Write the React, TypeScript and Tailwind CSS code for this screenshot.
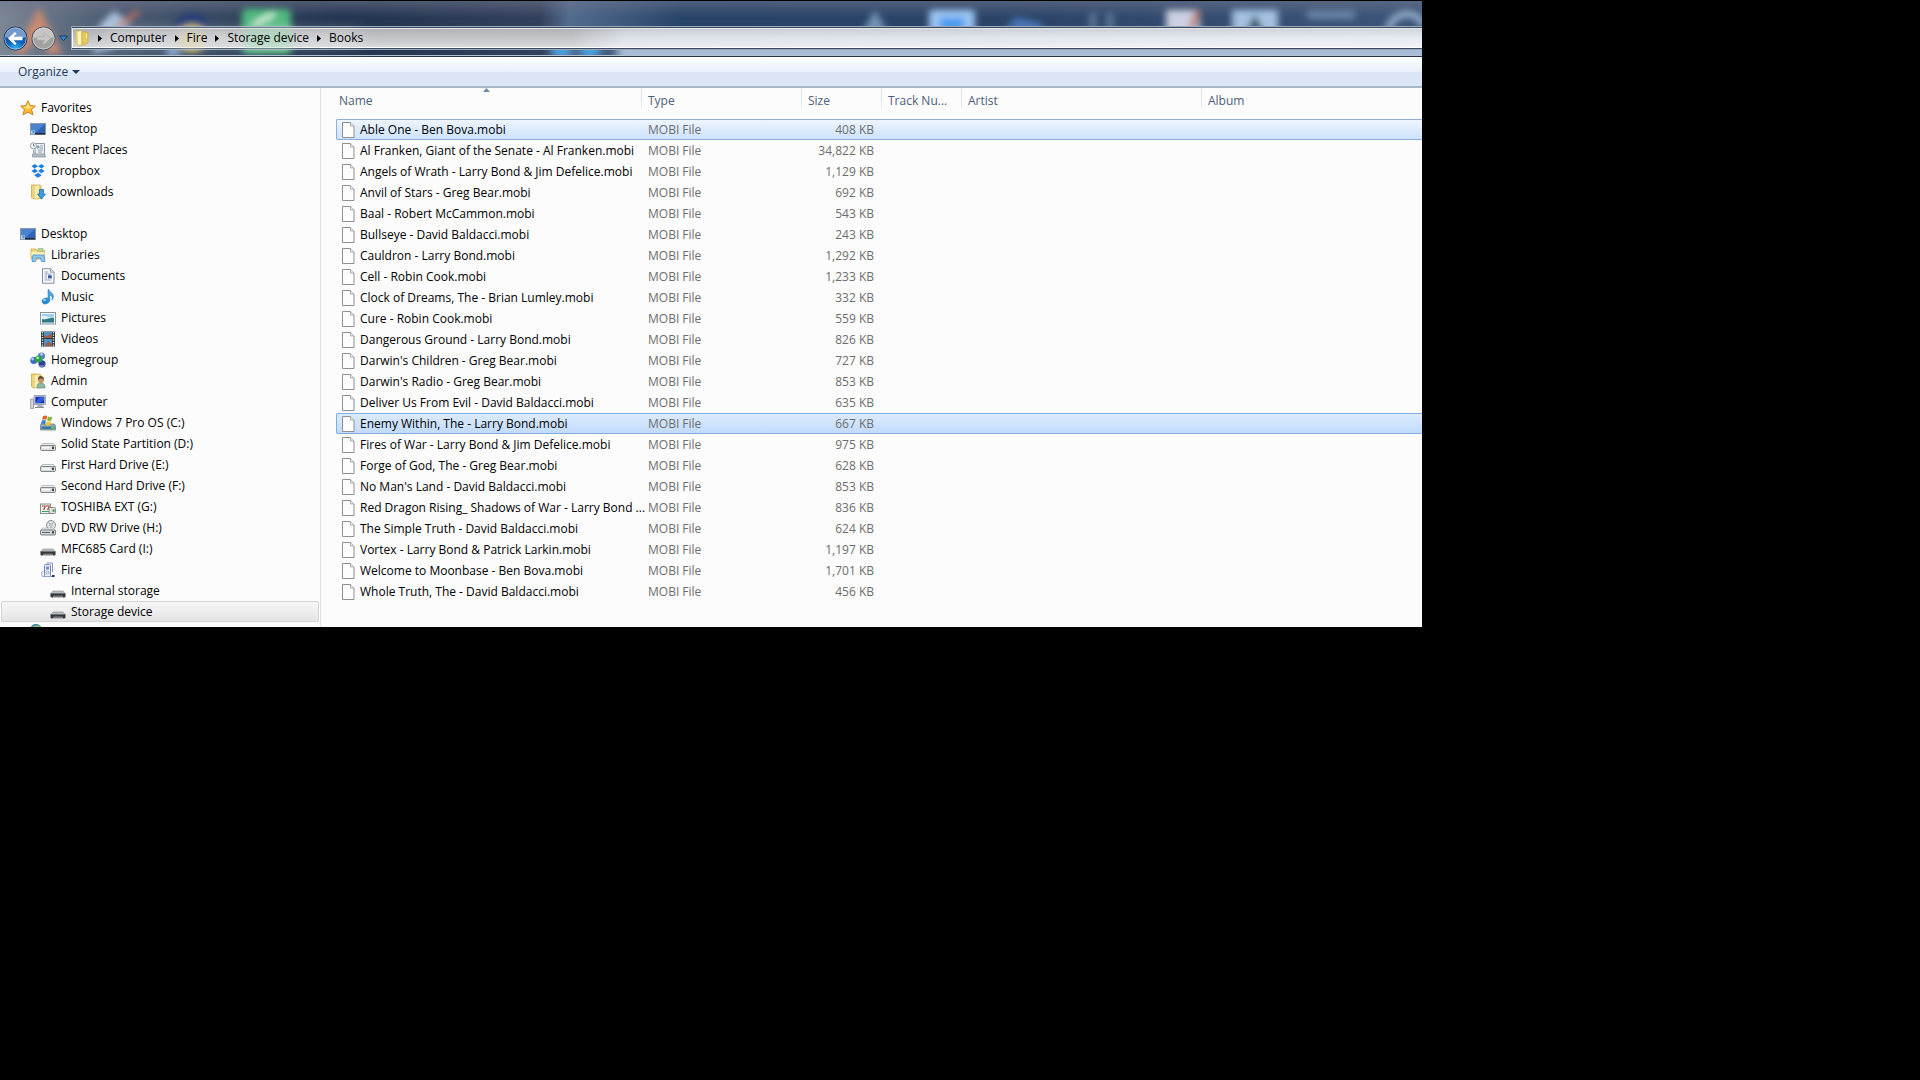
import React, { useState } from "react";
import clsx from "clsx";

type IconName =
  | "star"
  | "desktop"
  | "recent"
  | "dropbox"
  | "downloads"
  | "libraries"
  | "documents"
  | "music"
  | "pictures"
  | "videos"
  | "homegroup"
  | "admin"
  | "computer"
  | "windows"
  | "drive"
  | "toshiba"
  | "dvd"
  | "card"
  | "player"
  | "network";

const iconShapes: Record<IconName, React.ReactNode> = {
  star: (
    <>
      <path d="M8 .8 10.2 5.6 15.4 6.1 11.6 9.6 13 14.8 8 12.2 3 14.8 4.3 9.6.6 6.1 5.8 5.6Z" fill="#fdb92e" stroke="#c87a1c" strokeWidth=".9" />
      <path d="M8 2.6 9.5 6.5 13.4 6.9 8 9 2.8 6.9 6.5 6.5Z" fill="#ffe58a" />
    </>
  ),
  desktop: (
    <>
      <rect x=".5" y="2.5" width="15" height="11" fill="#3b4756" stroke="#8d97a3" />
      <path d="M1 3h14v9H1z" fill="#2f64b8" />
      <path d="M1 3h14L5 12H1z" fill="#5c93de" opacity=".65" />
      <path d="M1 12h14v1.500H1z" fill="#1f2c3d" />
      <rect x="1" y="9.500" width="4" height="4" fill="#b9d9f2" />
      <path d="M2 12.500 4 10.500M4 10.500v2M4 10.500H2.500" stroke="#2b5ea8" strokeWidth=".7" />
    </>
  ),
  recent: (
    <>
      <path d="M5 1.5h9.5V13H5z" fill="#eef2f5" stroke="#8c979e" />
      <path d="M7 4h2v2H7zM10 4h3M10 6h3M8 8h5M8 10h4" fill="#aac2d4" stroke="#7897ad" strokeWidth=".9" />
      <path d="M2.500 12h12l1 3h-13z" fill="#b8bfc3" stroke="#8c979e" strokeWidth=".8" />
      <circle cx="3.500" cy="3.800" r="3" fill="#f4f6f8" stroke="#8a959d" strokeWidth=".9" />
      <path d="M3.500 2v2H5" fill="none" stroke="#59646c" strokeWidth=".8" />
      <path d="M3.500 8v3M3 11h3" stroke="#a4adb3" />
    </>
  ),
  dropbox: (
    <path
      d="M4.700 1 8 3.200 4.700 5.400 1.400 3.200ZM11.300 1l3.300 2.200-3.300 2.200L8 3.200ZM4.700 5.800 8 8 4.700 10.200 1.400 8ZM11.300 5.800 14.600 8l-3.300 2.200L8 8ZM8 9.700l3.800 2.500L8 14.800l-3.800-2.600Z"
      fill="#1f7fe0"
    />
  ),
  downloads: (
    <>
      <path d="M1.500 1h8l1.500 1v12.500l-7 .5-2.500-1.500Z" fill="#ecd57f" stroke="#c9a94a" strokeWidth=".8" />
      <path d="M5 2.500 8.500 1v13L5 15Z" fill="#f8ecb4" />
      <path d="M9.500 5.500h4V10h2L11.500 15.200 7.500 10h2Z" fill="#3d9be0" stroke="#2a6ea9" strokeWidth=".8" />
    </>
  ),
  libraries: (
    <>
      <path d="M1 2h5l1 1.500h7.500V12H1z" fill="#f0d981" stroke="#caa64a" strokeWidth=".8" />
      <path d="M8 1.500h5v3H8z" fill="#b8d59a" stroke="#8fae67" strokeWidth=".6" />
      <path d="M1.500 5h13v4h-13z" fill="#faeeb9" />
      <path d="M2 14.500 3 8h11l1 6.500h-3.500L10.500 11h-4l-1 3.500Z" fill="#8cc8ee" stroke="#4b8fc4" strokeWidth=".8" />
    </>
  ),
  documents: (
    <>
      <path d="M2.500 .7h8l3.500 3.500v11H2.500z" fill="#fbfcfd" stroke="#7f8b9a" />
      <path d="M10.500 .7v3.500H14" fill="#dfe6ee" stroke="#7f8b9a" strokeWidth=".8" />
      <path d="M4.500 4h4M4.500 6h7M4.500 8h2.500M4.500 10h2.500M4.500 12h7" stroke="#8497b4" strokeWidth=".9" />
      <rect x="8" y="7.200" width="3.800" height="3.200" fill="#3e5e9f" />
    </>
  ),
  music: (
    <>
      <path d="M9 .5c.5 3 5 3.500 4.500 7.500-.1 1.300-.8 2.300-1.600 3 .8-2.300.3-4.300-2-5V12H8V.5Z" fill="#4ba3dd" stroke="#2577b5" strokeWidth=".5" />
      <ellipse cx="5.700" cy="12" rx="4" ry="3.200" fill="#2b8bd0" transform="rotate(-20 5.700 12)" />
      <ellipse cx="4.700" cy="11" rx="1.800" ry="1" fill="#8fd0f5" />
    </>
  ),
  pictures: (
    <>
      <rect x=".5" y="2.500" width="15" height="11.500" fill="#fafbfc" stroke="#8b949c" />
      <path d="M2 4h12v8.500H2z" fill="#9ad0ee" />
      <path d="M2 6.500c4-1.500 7 2 12 .5v2.500H2z" fill="#e2f2f4" />
      <path d="M2 9c4 1.500 8-2 12-1v4.500H2z" fill="#2d7c86" />
    </>
  ),
  videos: (
    <>
      <path d="M1 .5h14v15H1z" fill="#2c343c" />
      <path d="M4 1h8v6H4zM4 8h8v7H4z" fill="#4e94c8" />
      <path d="M4 4 8 5.500 10 2 12 4v3H4zM5 15l3-5 4 3v2z" fill="#a15c4d" />
      <path d="M2.500 1v14M13.500 1v14" stroke="#e8eef2" strokeWidth="1.400" strokeDasharray="1.300 1.200" />
    </>
  ),
  homegroup: (
    <>
      <circle cx="3.800" cy="8.500" r="3.500" fill="#3a6fc0" />
      <circle cx="11.500" cy="4" r="3.600" fill="#5a82cf" />
      <circle cx="12" cy="11.800" r="3.600" fill="#2f3f9d" />
      <circle cx="8.600" cy="7" r="3.600" fill="#2ca044" />
      <circle cx="7.700" cy="5.800" r="1.400" fill="#b6edb0" />
      <circle cx="2.700" cy="7.100" r="1.300" fill="#aecdf3" />
      <circle cx="11.500" cy="2.300" r="1.200" fill="#c9dafa" />
      <path d="M9.500 13.500c1.500 1 3.500 1 5-.5" fill="none" stroke="#a6b5ee" />
    </>
  ),
  admin: (
    <>
      <path d="M1.500 1h7l2.500 1v12.500l-7 .5-2.500-1.500Z" fill="#ecd57f" stroke="#c9a94a" strokeWidth=".8" />
      <path d="M5 2.500 8.500 1.500v12L5 15Z" fill="#f8ecb4" />
      <path d="M7 15c0-4 1.500-5 4-5s4 1 4 5Z" fill="#8cb89e" stroke="#5d8c79" strokeWidth=".6" />
      <circle cx="11" cy="7" r="3" fill="#c59469" />
      <path d="M8 7c-.2-3.500 1.500-4 3-4s3 1 3 4c-1-2-4-2-6 0Z" fill="#6b4a30" />
    </>
  ),
  computer: (
    <>
      <path d="M4 1.500h11.500v9H4z" fill="#d5d8dc" stroke="#9197a0" strokeWidth=".8" />
      <path d="M5.300 2.700h9v6.600h-9z" fill="#1734c0" />
      <path d="M10 2.700h4.300v3L9 9.300H5.300Z" fill="#4d7af0" opacity=".6" />
      <path d="M8 10.500h4l1.500 3h-7z" fill="#a9aeb6" />
      <path d="M.7 5h2.800v9.500H.7z" fill="#d7dade" stroke="#8b929b" strokeWidth=".8" />
      <path d="M5 13.500h9" stroke="#868d96" />
    </>
  ),
  windows: (
    <>
      <path d="M1 9h13.500l1 2v4H.5v-4Z" fill="#9eb0b6" stroke="#65747a" strokeWidth=".7" />
      <path d="M1.500 11.500h13V14h-13z" fill="#357a9c" />
      <path d="M11 12h3v1.500h-3z" fill="#66cf62" />
      <path d="M3 1.500C4.500.3 6 .3 7.200 1.200L6.200 5C5 4 3.500 4 2 5Z" fill="#e85a26" />
      <path d="M8 1.600c1.300.8 2.700.8 4.300-.1l-1 3.700c-1.500 1-3 .9-4.300 0Z" fill="#79b938" />
      <path d="M1.800 5.800c1.500-1 3-1 4.200 0L5 9.500c-1.200-1-2.700-1-4.200 0Z" fill="#3b82cf" />
      <path d="M6.800 6.200c1.300.8 2.700.8 4.300-.1l-1 3.700c-1.500 1-3 .9-4.300 0Z" fill="#f6c42a" />
    </>
  ),
  drive: (
    <>
      <path d="M2.500 7.500h11l2 2.500H.5Z" fill="#eceeef" stroke="#a3a8ab" strokeWidth=".7" />
      <rect x=".5" y="9.500" width="15" height="5" rx="1.200" fill="#d9dcdd" stroke="#777d80" strokeWidth=".9" />
      <path d="M2 11h8v1.500H2z" fill="#f8f9f9" />
      <rect x="12" y="10.600" width="2" height="2.500" fill="#454c48" />
    </>
  ),
  toshiba: (
    <>
      <rect x=".5" y="5" width="10" height="9.500" fill="#eef4ef" stroke="#7c9484" />
      <path d="M2 7h3v1.200L3.500 11M6 7h3v1.200L7.500 11" fill="none" stroke="#b23a3a" strokeWidth="1.200" />
      <path d="M2 12.500h7" stroke="#4d9b66" />
      <rect x="9" y="8.500" width="6.500" height="6" rx="1" fill="#dfe3e1" stroke="#7c8580" strokeWidth=".9" />
      <path d="M12.500 10.500h2v2.200h-2z" fill="#3c7f49" />
    </>
  ),
  dvd: (
    <>
      <circle cx="11" cy="5" r="4.500" fill="#e3e7e9" stroke="#7c8387" strokeWidth=".9" />
      <path d="M11 5 8 2M11 5l3-3M11 5v4" stroke="#9aa7b0" strokeWidth=".8" />
      <circle cx="11" cy="5" r="1.300" fill="#fff" stroke="#7c8387" strokeWidth=".7" />
      <path d="M2.500 8h11l2 2.500H.5Z" fill="#e6e8e9" stroke="#a3a8ab" strokeWidth=".6" />
      <rect x=".5" y="10" width="15" height="5" rx="1" fill="#d3d6d8" stroke="#6d7376" strokeWidth=".9" />
      <path d="M2 12.500h8" stroke="#5d6366" />
      <rect x="12" y="11.200" width="2" height="2.200" fill="#3c443f" />
    </>
  ),
  card: (
    <>
      <path d="M3 8h10l2.500 3H.5Z" fill="#b8bbbc" stroke="#8a8e90" strokeWidth=".6" />
      <path d="M.5 10.500h15v3.500l-2 .8-1-1.300h-9l-1 1.300-2-.8Z" fill="#34383a" />
      <path d="M3.500 12.500h9v2h-9z" fill="#7a7f82" />
    </>
  ),
  player: (
    <>
      <path d="M6.500 1h6v9" fill="none" stroke="#8497c4" />
      <rect x="4.500" y="2.500" width="6" height="12" rx="1" fill="#e9eef8" stroke="#7285b4" />
      <path d="M6 4.500h3v3H6z" fill="#6f8fd0" />
      <circle cx="7.500" cy="10.500" r="1.400" fill="#fff" stroke="#7285b4" strokeWidth=".8" />
      <path d="M3.500 9C1.500 9.500 1 12 2.500 14.500H12" fill="none" stroke="#8fa1ca" />
      <path d="M12 13h2.500v2H12z" fill="#27304c" />
    </>
  ),
  network: (
    <>
      <circle cx="6" cy="8.500" r="6" fill="#4194c7" stroke="#2d6d9f" />
      <path d="M2 6c2-3 6-4 9-1L6 9Z" fill="#7cc078" />
    </>
  ),
};

function Icon({ name }: { name: IconName }) {
  return (
    <svg viewBox="0 0 16 16" className="w-4 h-4 shrink-0" aria-hidden="true">
      {iconShapes[name]}
    </svg>
  );
}

interface NavItem {
  label: string;
  icon: IconName;
  level: 0 | 1 | 2 | 3;
}

const indents = ["pl-[19px]", "pl-[29px]", "pl-[39px]", "pl-[49px]"];

const favorites: NavItem[] = [
  { label: "Favorites", icon: "star", level: 0 },
  { label: "Desktop", icon: "desktop", level: 1 },
  { label: "Recent Places", icon: "recent", level: 1 },
  { label: "Dropbox", icon: "dropbox", level: 1 },
  { label: "Downloads", icon: "downloads", level: 1 },
];

const places: NavItem[] = [
  { label: "Desktop", icon: "desktop", level: 0 },
  { label: "Libraries", icon: "libraries", level: 1 },
  { label: "Documents", icon: "documents", level: 2 },
  { label: "Music", icon: "music", level: 2 },
  { label: "Pictures", icon: "pictures", level: 2 },
  { label: "Videos", icon: "videos", level: 2 },
  { label: "Homegroup", icon: "homegroup", level: 1 },
  { label: "Admin", icon: "admin", level: 1 },
  { label: "Computer", icon: "computer", level: 1 },
  { label: "Windows 7 Pro OS (C:)", icon: "windows", level: 2 },
  { label: "Solid State Partition (D:)", icon: "drive", level: 2 },
  { label: "First Hard Drive (E:)", icon: "drive", level: 2 },
  { label: "Second Hard Drive (F:)", icon: "drive", level: 2 },
  { label: "TOSHIBA EXT (G:)", icon: "toshiba", level: 2 },
  { label: "DVD RW Drive (H:)", icon: "dvd", level: 2 },
  { label: "MFC685 Card (I:)", icon: "card", level: 2 },
  { label: "Fire", icon: "player", level: 2 },
  { label: "Internal storage", icon: "card", level: 3 },
  { label: "Storage device", icon: "card", level: 3 },
];

const files: [string, string][] = [
  ["Able One - Ben Bova.mobi", "408 KB"],
  ["Al Franken, Giant of the Senate - Al Franken.mobi", "34,822 KB"],
  ["Angels of Wrath - Larry Bond & Jim Defelice.mobi", "1,129 KB"],
  ["Anvil of Stars - Greg Bear.mobi", "692 KB"],
  ["Baal - Robert McCammon.mobi", "543 KB"],
  ["Bullseye - David Baldacci.mobi", "243 KB"],
  ["Cauldron - Larry Bond.mobi", "1,292 KB"],
  ["Cell - Robin Cook.mobi", "1,233 KB"],
  ["Clock of Dreams, The - Brian Lumley.mobi", "332 KB"],
  ["Cure - Robin Cook.mobi", "559 KB"],
  ["Dangerous Ground - Larry Bond.mobi", "826 KB"],
  ["Darwin's Children - Greg Bear.mobi", "727 KB"],
  ["Darwin's Radio - Greg Bear.mobi", "853 KB"],
  ["Deliver Us From Evil - David Baldacci.mobi", "635 KB"],
  ["Enemy Within, The - Larry Bond.mobi", "667 KB"],
  ["Fires of War - Larry Bond & Jim Defelice.mobi", "975 KB"],
  ["Forge of God, The - Greg Bear.mobi", "628 KB"],
  ["No Man's Land - David Baldacci.mobi", "853 KB"],
  ["Red Dragon Rising_ Shadows of War - Larry Bond ...", "836 KB"],
  ["The Simple Truth - David Baldacci.mobi", "624 KB"],
  ["Vortex - Larry Bond & Patrick Larkin.mobi", "1,197 KB"],
  ["Welcome to Moonbase - Ben Bova.mobi", "1,701 KB"],
  ["Whole Truth, The - David Baldacci.mobi", "456 KB"],
];

// Desktop showing through the Aero glass
function GlassBackdrop() {
  return (
    <svg
      className="absolute inset-0 w-full h-full"
      viewBox="0 0 1422 56"
      preserveAspectRatio="none"
      aria-hidden="true"
    >
      <defs>
        <linearGradient id="glass">
          <stop offset="0" stopColor="#7c8794" />
          <stop offset=".07" stopColor="#505f76" />
          <stop offset=".16" stopColor="#33455e" />
          <stop offset=".24" stopColor="#22344f" />
          <stop offset=".38" stopColor="#33405c" />
          <stop offset=".4" stopColor="#526c8e" />
          <stop offset=".48" stopColor="#264468" />
          <stop offset=".72" stopColor="#2c4468" />
          <stop offset="1" stopColor="#3c5578" />
        </linearGradient>
        <linearGradient id="glassTop" x2="0" y2="1">
          <stop offset="0" stopColor="#70758c" stopOpacity=".55" />
          <stop offset=".3" stopColor="#70758c" stopOpacity="0" />
        </linearGradient>
        <filter id="soft" x="-40%" y="-40%" width="180%" height="180%">
          <feGaussianBlur stdDeviation="4" />
        </filter>
        <filter id="softer" x="-40%" y="-40%" width="180%" height="180%">
          <feGaussianBlur stdDeviation="3.5" />
        </filter>
      </defs>
      <rect width="1422" height="56" fill="url(#glass)" />
      <rect width="1422" height="56" fill="url(#glassTop)" />
      <path d="M617 38H1440V70H617Z" fill="#a7bdd7" filter="url(#soft)" />
      <g filter="url(#softer)">
        <path d="M39 6 62 54H48L39 34 24 54H14Z" fill="#c98a72" />
        <path d="M92 54 100 24 114 10 130 22 112 48Z" fill="#a9c3dd" />
        <path d="M116 27 139 11" stroke="#b8705a" strokeWidth="5" />
        <ellipse cx="192" cy="22" rx="16" ry="10" fill="#263d78" />
        <circle cx="192" cy="38" r="14" fill="#c5b552" />
        <path d="M164 56 172 44 184 56Z" fill="#8cadd8" />
        <rect x="242" y="8" width="49" height="46" rx="5" fill="#4fb97f" />
        <path d="M254 24 274 13" stroke="#d6f3e0" strokeWidth="5" />
        <ellipse cx="561" cy="50" rx="10" ry="8" fill="#4aa0e0" />
        <ellipse cx="590" cy="50" rx="10" ry="8" fill="#4aa0e0" />
        <path d="M863 30 875 9 887 30Z" fill="#7494b5" />
        <rect x="929" y="9" width="46" height="34" rx="4" fill="#9cc5f2" />
        <rect x="940" y="17" width="24" height="16" fill="#4d9bf0" />
        <path d="M1004 30 1016 16 1040 22 1046 32Z" fill="#4774b3" />
        <path d="M1093 12v18M1110 12v18" stroke="#5f7a99" strokeWidth="7" />
        <rect x="1166" y="9" width="34" height="24" fill="#ccd0e2" />
        <path d="M1198 10 1192 28" stroke="#b9705f" strokeWidth="6" />
        <rect x="1232" y="9" width="46" height="26" fill="#a4c2e0" />
        <path d="M1244 35 1255 13 1266 35Z" fill="#2f5169" />
        <rect x="1307" y="9" width="48" height="10" fill="#6580a3" />
        <path d="M1388 34c0-26 34-26 34-8" fill="none" stroke="#92abc8" strokeWidth="7" />
      </g>
    </svg>
  );
}

function Breadcrumbs() {
  const path = ["Computer", "Fire", "Storage device", "Books"];
  return (
    <nav
      aria-label="Address"
      className="flex-1 min-w-0 h-6 flex items-center border-y border-l border-[#9aa8b8] bg-[#30415a]"
    >
      <div className="relative flex-1 h-[22px] border-y border-[#3b4b63] flex">
        <div className="absolute inset-0 bg-[linear-gradient(to_right,#c0c2c6_0,#c3c5c8_37%,#dde2e9_41%,#e6ebf2_100%)] border-y border-l border-white" />
        <div className="absolute inset-0 bg-linear-to-b from-black/10 via-transparent to-white/40" />
        {/* White haze behind the path, tinted where a desktop icon lies below */}
        <div className="absolute left-8 top-1 w-64 h-3 bg-white/40 blur-sm" />
        <div className="absolute left-[172px] top-0 w-12 h-5 bg-[#a9dcbd]/70 blur-xs" />
        <div className="absolute left-[108px] top-1 w-6 h-4 bg-[#e3d9a8]/60 blur-xs" />
        <div className="relative flex items-center pl-0.5">
          <svg viewBox="0 0 16 16" className="w-4 h-4" aria-hidden="true">
            <path d="M2 1h6l1 1.500V15l-4 .5L2 14Z" fill="#efd980" stroke="#cdae50" strokeWidth=".6" />
            <path d="M8 2h5l1 1v10l-4 2-2-1Z" fill="#e6c95e" stroke="#c4a23e" strokeWidth=".6" />
            <path d="M4 2 7 1v13l-3 1Z" fill="#fdf4c0" />
            <path d="M12.500 4v4" stroke="#fff3ba" />
          </svg>
          {path.map((part) => (
            <React.Fragment key={part}>
              <svg viewBox="0 0 4 7" className="w-1 h-[7px] mx-2" aria-hidden="true">
                <path d="M0 0 4 3.500 0 7Z" fill="#000" />
              </svg>
              <button className="text-black whitespace-nowrap">{part}</button>
            </React.Fragment>
          ))}
        </div>
      </div>
    </nav>
  );
}

function TitleBar() {
  return (
    <header className="relative h-14 border-b border-[#26354d]">
      <GlassBackdrop />
      <div className="relative flex items-center h-[55px] pt-5 border-b border-[#b4c1d0]">
        <button aria-label="Back" className="ml-[3px]">
          <svg viewBox="0 0 25 25" className="w-[25px] h-[25px]">
            <defs>
              <radialGradient id="back" cx=".5" cy="1" r=".9">
                <stop offset="0" stopColor="#35c5f5" />
                <stop offset=".45" stopColor="#1463b6" />
                <stop offset="1" stopColor="#123d86" />
              </radialGradient>
            </defs>
            <circle cx="12.500" cy="12.500" r="11.500" fill="url(#back)" stroke="#1b2f55" />
            <path d="M2.500 11a10 9.500 0 0 1 20 0c-5 2-15 2-20 0Z" fill="#b5d2f1" opacity=".6" />
            <circle cx="12.500" cy="12.500" r="10.700" fill="none" stroke="#a9c8e8" strokeWidth=".8" />
            <path d="M5 12.500 12 6l1.500 1.500L10.500 10.800h9v3.400h-9l3 3.300L12 19Z" fill="#fff" />
          </svg>
        </button>
        <button aria-label="Forward" className="ml-[3px]">
          <svg viewBox="0 0 25 25" className="w-[25px] h-[25px]">
            <circle cx="12.500" cy="12.500" r="11.500" fill="#a3a19f" stroke="#454f5d" />
            <path d="M2.500 11a10 9.500 0 0 1 20 0c-5 2-15 2-20 0Z" fill="#d5d2d0" opacity=".75" />
            <circle cx="12.500" cy="12.500" r="10.500" fill="none" stroke="#d2d3d5" strokeWidth=".8" />
            <path d="M19.500 12.500 13 6.500l-1.500 1.500 2.500 2.700H6v3.600h8L11.500 17l1.500 1.500Z" fill="#c9c7c6" stroke="#a7a5a4" strokeWidth=".6" />
          </svg>
        </button>
        <button aria-label="Recent pages" className="ml-[3px] mr-[3px]">
          <svg viewBox="0 0 9 7" className="w-[9px] h-[7px]">
            <path d="M.7 1h7.600L4.500 5.800Z" fill="#3d8ad6" stroke="#14305c" strokeWidth=".9" />
          </svg>
        </button>
        <Breadcrumbs />
      </div>
    </header>
  );
}

function Toolbar() {
  return (
    <div className="h-[31px] flex items-center border-b-2 border-[#a9b7ca] bg-[linear-gradient(#fdfeff_0,#e9f0fa_50%,#dbe5f3_50%,#dbe6f4_100%)]">
      <button className="flex items-center gap-1 ml-[18px] text-[#1e395b]">
        Organize
        <svg viewBox="0 0 8 4" className="w-2 h-1" aria-hidden="true">
          <path d="M0 0h8L4 4Z" fill="#1e395b" />
        </svg>
      </button>
    </div>
  );
}

function NavList({ items, current }: { items: NavItem[]; current?: string }) {
  return (
    <ul className="px-px">
      {items.map((item) => (
        <li key={item.label}>
          <a
            href="#"
            className={clsx(
              "flex items-center gap-[5px] h-[21px] text-black whitespace-nowrap",
              item.label === current &&
                "rounded-xs bg-linear-to-b from-[#f8f8f8] to-[#e3e3e3] shadow-[inset_0_0_0_1px_#d5d5d5]",
              indents[item.level],
            )}
          >
            <Icon name={item.icon} />
            {item.label}
          </a>
        </li>
      ))}
    </ul>
  );
}

function Sidebar() {
  return (
    <aside className="w-[321px] shrink-0 border-r border-[#d6e2ef] pt-[9px] overflow-hidden [contain:size]">
      <NavList items={favorites} />
      <div className="h-[21px]" />
      <NavList items={places} current="Storage device" />
      <div className="pl-[30px]">
        <Icon name="network" />
      </div>
    </aside>
  );
}

function FileTable() {
  const [selected, setSelected] = useState("Enemy Within, The - Larry Bond.mobi");
  const columns = ["Name", "Type", "Size", "Track Nu...", "Artist", "Album"];

  return (
    <main className="flex-1 min-w-0 pl-[15px] pb-[25px] overflow-hidden">
      <table className="w-full table-fixed border-separate border-spacing-0 text-left">
        <colgroup>
          <col className="w-[306px]" />
          <col className="w-[160px]" />
          <col className="w-20" />
          <col className="w-20" />
          <col className="w-60" />
          <col />
        </colgroup>
        <thead>
          <tr className="h-[31px]">
            {columns.map((column, i) => (
              <th key={column} className="relative p-0 align-top font-normal text-[#4c607a]">
                <div
                  className={clsx(
                    "h-[26px] leading-[26px] whitespace-nowrap",
                    i === 0 ? "pl-[3px]" : "pl-1.5",
                  )}
                >
                  {column}
                </div>
                {i < columns.length - 1 && (
                  <span className="absolute right-0 top-0 w-px h-5 bg-linear-to-b from-[#d5e2ef] to-[#e6edf5]" />
                )}
                {i === 0 && (
                  <svg viewBox="0 0 7 4" className="absolute left-[147px] top-0 w-[7px] h-1" aria-hidden="true">
                    <path d="M0 4 3.500 0 7 4Z" fill="#6d8ba8" />
                  </svg>
                )}
              </th>
            ))}
          </tr>
        </thead>
        <tbody>
          {files.map(([name, size], row) => {
            const isSelected = name === selected;
            const cell = clsx(
              "h-[21px] p-0 border-y whitespace-nowrap",
              isSelected && "border-[#84acdd] bg-linear-to-b from-[#dcebfd] to-[#c1dbfc]",
              !isSelected && row === 0 && "border-[#8fb0d4] bg-linear-to-b from-[#eef5fe] to-[#cde3fd]",
              !isSelected && row !== 0 && "border-transparent",
            );
            return (
              <tr key={name} onClick={() => setSelected(name)} className="leading-[19px]">
                <td className={clsx(cell, "border-l rounded-l-xs text-black")}>
                  <div className="flex items-center gap-1 pl-[3px]">
                    <svg viewBox="0 0 16 16" className="w-4 h-4 shrink-0" aria-hidden="true">
                      <path d="M2.500 .5h8l3.500 3.500v11.500H2.500z" fill="#fdfdfd" stroke="#8f8f8f" />
                      <path d="M10.500 .5v3.500H14" fill="#eee" stroke="#9d9d9d" strokeWidth=".8" />
                    </svg>
                    {name}
                  </div>
                </td>
                <td className={clsx(cell, "text-[#6d6d6d]")}>
                  <span className="pl-1.5">MOBI File</span>
                </td>
                <td className={clsx(cell, "text-right text-[#6d6d6d]")}>
                  <span className="pr-2">{size}</span>
                </td>
                <td className={cell} />
                <td className={cell} />
                <td className={cell} />
              </tr>
            );
          })}
        </tbody>
      </table>
    </main>
  );
}

export default function App() {
  return (
    <div className="min-h-screen bg-black pt-px font-['Open_Sans',sans-serif] text-[12px] leading-4">
      <div className="w-full max-w-[1422px] overflow-hidden bg-[#fcfcfc]">
        <TitleBar />
        <Toolbar />
        <div className="flex">
          <Sidebar />
          <FileTable />
        </div>
      </div>
    </div>
  );
}
